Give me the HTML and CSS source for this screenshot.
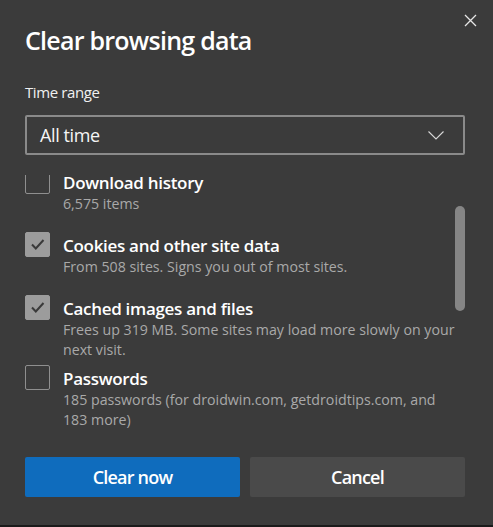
FILE: index.html
```html
<!DOCTYPE html>
<html lang="en">
<head>
<meta charset="utf-8">
<title>Clear browsing data</title>
<link rel="stylesheet" href="styles.css">
</head>
<body>
<div class="dialog">
  <button class="close" aria-label="Close">
    <svg width="13" height="13" viewBox="0 0 13 13"><path d="M1 1 L12 12 M12 1 L1 12" stroke="#e6e6e6" stroke-width="1.3" fill="none"/></svg>
  </button>
  <h1 class="title">Clear browsing data</h1>
  <div class="label">Time range</div>
  <div class="select">
    <span class="select-value">All time</span>
    <svg class="chevron" width="16" height="9" viewBox="0 0 16 9"><path d="M0.5 0.5 L8 8 L15.5 0.5" stroke="#d8d8d8" stroke-width="1.1" fill="none"/></svg>
  </div>
  <div class="list">
    <div class="list-inner">
      <div class="row">
        <span class="box"></span>
        <div class="text">
          <div class="row-title">Download history</div>
          <div class="row-sub">6,575 items</div>
        </div>
      </div>
      <div class="row">
        <span class="box checked"><svg width="25" height="25" viewBox="0 0 25 25"><path d="M7 12.5 L10.8 16.5 L18.5 8" stroke="#3a3a3a" stroke-width="2" fill="none"/></svg></span>
        <div class="text">
          <div class="row-title">Cookies and other site data</div>
          <div class="row-sub">From 508 sites. Signs you out of most sites.</div>
        </div>
      </div>
      <div class="row">
        <span class="box checked"><svg width="25" height="25" viewBox="0 0 25 25"><path d="M7 12.5 L10.8 16.5 L18.5 8" stroke="#3a3a3a" stroke-width="2" fill="none"/></svg></span>
        <div class="text">
          <div class="row-title">Cached images and files</div>
          <div class="row-sub">Frees up 319 MB. Some sites may load more slowly on your next visit.</div>
        </div>
      </div>
      <div class="row">
        <span class="box"></span>
        <div class="text">
          <div class="row-title">Passwords</div>
          <div class="row-sub">185 passwords (for droidwin.com, getdroidtips.com, and 183 more)</div>
        </div>
      </div>
    </div>
    <div class="scrollbar"></div>
  </div>
  <div class="actions">
    <button class="btn primary">Clear now</button>
    <button class="btn secondary">Cancel</button>
  </div>
</div>
<div class="bottom-strip"></div>
</body>
</html>
```
FILE: styles.css
```css
html, body {
  margin: 0;
  padding: 0;
}
body {
  width: 493px;
  height: 527px;
  overflow: hidden;
  background: #3b3b3b;
  font-family: "Open Sans", "Noto Sans", sans-serif;
  color: #ffffff;
  display: flex;
  flex-direction: column;
}
.dialog {
  position: relative;
  flex: 1;
  padding: 0 28px 0 25px;
  display: flex;
  flex-direction: column;
}
.close {
  position: absolute;
  top: 14px;
  right: 16px;
  width: 13px;
  height: 13px;
  padding: 0;
  border: 0;
  background: none;
  display: flex;
}
.title {
  margin: 24px 0 0;
  font-size: 25px;
  line-height: 32px;
  font-weight: 600;
  letter-spacing: -0.75px;
}
.label {
  margin-top: 26px;
  font-size: 15px;
  line-height: 20px;
  color: #f0f0f0;
  letter-spacing: -0.4px;
}
.select {
  margin-top: 13px;
  height: 40px;
  box-sizing: border-box;
  border: 2px solid #8a8a8a;
  border-radius: 2px;
  display: flex;
  align-items: center;
  justify-content: space-between;
  padding: 0 19px 0 13px;
}
.select-value {
  font-size: 18px;
  letter-spacing: -0.4px;
  color: #f5f5f5;
}
.chevron {
  display: block;
}
.list {
  position: relative;
  margin-top: 20px;
  height: 262px;
  overflow: hidden;
}
.list-inner {
  margin-top: -6px;
  width: 431px;
}
.row {
  display: flex;
  gap: 13px;
  min-height: 63px;
  box-sizing: border-box;
  padding-bottom: 5px;
}
.box {
  flex: none;
  width: 25px;
  height: 25px;
  box-sizing: border-box;
  border: 1px solid #8f8f8f;
  border-radius: 2px;
  display: flex;
}
.box.checked {
  background: #9c9c9c;
  border-color: #9c9c9c;
}
.box.checked svg {
  margin: -1px;
}
.text {
  padding-top: 2px;
  flex: 1;
}
.row-title {
  font-size: 17px;
  line-height: 24px;
  font-weight: 600;
  letter-spacing: -0.3px;
}
.row-sub {
  font-size: 14.2px;
  line-height: 20px;
  color: #a9a9a9;
  margin-top: -1px;
}
.scrollbar {
  position: absolute;
  right: 0;
  top: 31px;
  width: 10px;
  height: 105px;
  border-radius: 5px;
  background: #858585;
}
.actions {
  margin-top: 20px;
  display: flex;
  gap: 10px;
}
.btn {
  flex: 1;
  height: 40px;
  border: 0;
  border-radius: 2px;
  font-family: "Open Sans", "Noto Sans", sans-serif;
  font-size: 18px;
  font-weight: 600;
  letter-spacing: -0.8px;
  color: #ffffff;
  padding: 0;
}
.btn.primary {
  background: #0f6cbd;
}
.btn.secondary {
  background: #4a4a4a;
}
.bottom-strip {
  height: 2px;
  background: #1a1a1a;
  flex: none;
}
```
